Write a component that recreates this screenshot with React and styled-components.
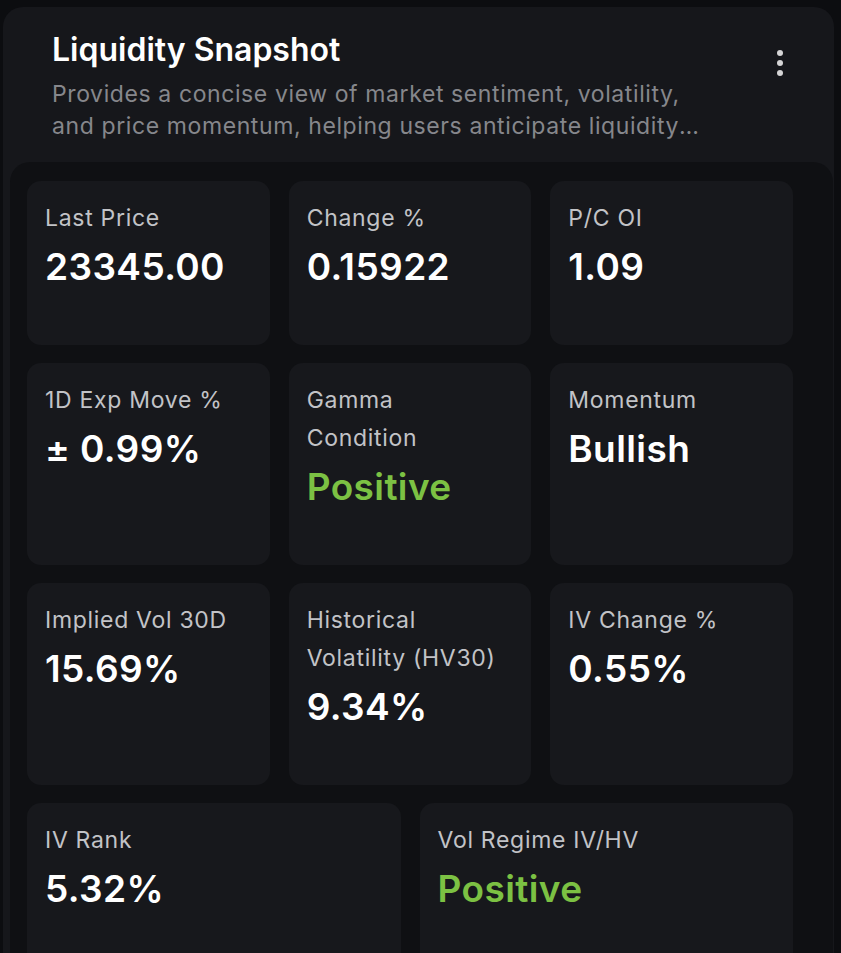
import styled, { createGlobalStyle } from "styled-components";

const GlobalStyle = createGlobalStyle`
  body {
    margin: 0;
    background-color: #0c0d10;
    font-family: Inter, "Noto Sans", sans-serif;
    -webkit-font-smoothing: antialiased;
  }
`;

const Card = styled.div`
  margin: 7px 7px 0 3px;
  background-color: #16171b;
  border-radius: 20px 20px 0 0;
  overflow: hidden;
  height: 946px;
`;

const Header = styled.div`
  padding: 24px 50px 20px 49px;
`;

const TitleRow = styled.div`
  display: flex;
  align-items: flex-start;
  justify-content: space-between;
  height: 38px;
`;

const Title = styled.h1`
  margin: 0;
  font-size: 32px;
  line-height: 38px;
  font-weight: 600;
  color: #ffffff;
`;

const MenuButton = styled.button`
  border: none;
  background: none;
  padding: 0;
  margin-top: 18px;
  display: flex;
  cursor: pointer;
`;

const Description = styled.p`
  margin: 9px 0 0;
  max-width: 655px;
  font-size: 23px;
  line-height: 32px;
  letter-spacing: 0.6px;
  color: #86878c;
  display: -webkit-box;
  -webkit-line-clamp: 2;
  -webkit-box-orient: vertical;
  overflow: hidden;
`;

const Panel = styled.div`
  margin: 0 1px 0 7px;
  padding: 19px 40px 0 17px;
  background-color: #0f1013;
  border-radius: 20px;
  height: 800px;
`;

const Grid = styled.div`
  display: grid;
  grid-template-columns: repeat(6, 1fr);
  gap: 18px 19px;
`;

const Stat = styled.div`
  grid-column: span ${(p) => p.$span || 2};
  background-color: #17181c;
  border-radius: 14px;
  padding: 18px 18px 56px;
`;

const Label = styled.div`
  font-size: 23px;
  line-height: 38px;
  letter-spacing: 0.7px;
  color: #c2c3c7;
`;

const Value = styled.div`
  margin-top: 8px;
  font-size: 37px;
  line-height: 44px;
  letter-spacing: 0.4px;
  font-weight: 600;
  color: ${(p) => (p.$positive ? "#7cc143" : "#ffffff")};
`;

const stats = [
  { label: "Last Price", value: "23345.00" },
  { label: "Change %", value: "0.15922" },
  { label: "P/C OI", value: "1.09" },
  { label: "1D Exp Move %", value: "± 0.99%" },
  { label: ["Gamma", "Condition"], value: "Positive", positive: true },
  { label: "Momentum", value: "Bullish" },
  { label: "Implied Vol 30D", value: "15.69%" },
  { label: ["Historical", "Volatility (HV30)"], value: "9.34%" },
  { label: "IV Change %", value: "0.55%" },
  { label: "IV Rank", value: "5.32%", span: 3 },
  { label: "Vol Regime IV/HV", value: "Positive", positive: true, span: 3 },
];

function DotsIcon() {
  return (
    <svg width="8" height="28" viewBox="0 0 8 28">
      <circle cx="4" cy="4" r="3" fill="#d4d4d6" />
      <circle cx="4" cy="14" r="3" fill="#d4d4d6" />
      <circle cx="4" cy="24" r="3" fill="#d4d4d6" />
    </svg>
  );
}

export default function App() {
  return (
    <>
      <GlobalStyle />
      <Card>
        <Header>
          <TitleRow>
            <Title>Liquidity Snapshot</Title>
            <MenuButton aria-label="More options">
              <DotsIcon />
            </MenuButton>
          </TitleRow>
          <Description>
            Provides a concise view of market sentiment, volatility, and price
            momentum, helping users anticipate liquidity shifts and market
            behavior.
          </Description>
        </Header>
        <Panel>
          <Grid>
            {stats.map((s, i) => (
              <Stat key={i} $span={s.span}>
                {Array.isArray(s.label) ? (
                  s.label.map((l) => <Label key={l}>{l}</Label>)
                ) : (
                  <Label>{s.label}</Label>
                )}
                <Value $positive={s.positive}>{s.value}</Value>
              </Stat>
            ))}
          </Grid>
        </Panel>
      </Card>
    </>
  );
}
